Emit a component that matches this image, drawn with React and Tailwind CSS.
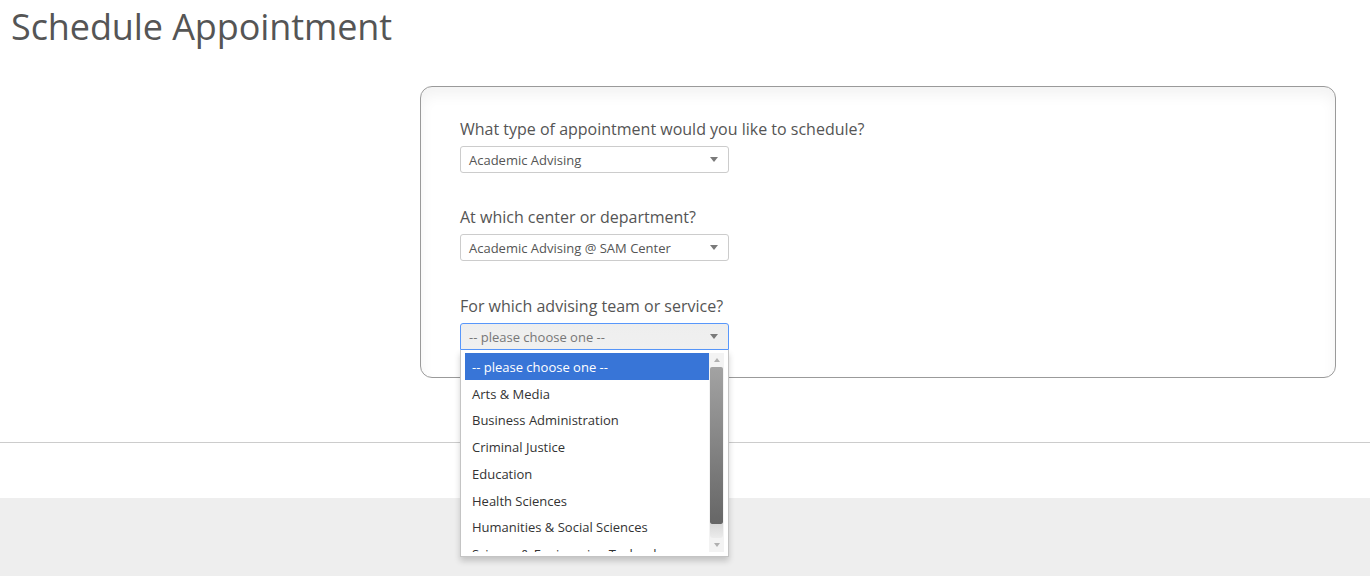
import React from "react";

function Arrow() {
  return (
    <svg width="8" height="5" viewBox="0 0 8 5" className="shrink-0">
      <path d="M0 0 L8 0 L4 5 Z" fill="#7a7a7a" />
    </svg>
  );
}

function Select({ value, open }) {
  return (
    <div
      className={
        open
          ? "flex h-[27px] w-[269px] items-center justify-between rounded-t-[3px] border border-[#5897fb] bg-gradient-to-b from-[#eeeeee] to-[#f0f0f0] pl-[8px] pr-[10px] text-[13px] text-[#777]"
          : "flex h-[27px] w-[269px] items-center justify-between rounded-[3px] border border-[#cccccc] bg-white pl-[8px] pr-[10px] text-[13px] text-[#555]"
      }
    >
      <span className="pt-[3px]">{value}</span>
      <Arrow />
    </div>
  );
}

const items = [
  "-- please choose one --",
  "Arts & Media",
  "Business Administration",
  "Criminal Justice",
  "Education",
  "Health Sciences",
  "Humanities & Social Sciences",
  "Science & Engineering Technology",
];

function Dropdown() {
  return (
    <div className="absolute left-0 top-[27px] z-10 flex h-[207px] w-[269px] border border-t-0 border-[#c4c4c4] bg-white pb-[4px] pl-[4px] pr-[4px] pt-[3px] shadow-[0_4px_6px_rgba(0,0,0,0.18)]">
      <ul className="h-[199px] w-[245px] overflow-hidden">
        {items.map((it, i) => (
          <li
            key={it}
            className={
              i === 0
                ? "flex h-[26.75px] items-center whitespace-nowrap bg-[#3875d7] pl-[7px] pt-[3px] text-[13px] text-white"
                : "flex h-[26.75px] items-center whitespace-nowrap pl-[7px] pt-[3px] text-[13px] text-[#333]"
            }
          >
            {it}
          </li>
        ))}
      </ul>
      <div className="flex h-[199px] w-[15px] flex-col bg-[#f3f3f3]">
        <div className="flex h-[14px] items-center justify-center">
          <svg width="6" height="4" viewBox="0 0 6 4">
            <path d="M0 4 L6 4 L3 0 Z" fill="#b0b0b0" />
          </svg>
        </div>
        <div className="mx-[1px] h-[157px] rounded-[2px] bg-gradient-to-b from-[#a3a3a3] to-[#666666]" />
        <div className="mx-[1px] h-[14px] rounded-b-[3px] bg-gradient-to-b from-[#d8d8d8] to-[#ececec]" />
        <div className="flex flex-1 items-center justify-center">
          <svg width="6" height="4" viewBox="0 0 6 4">
            <path d="M0 0 L6 0 L3 4 Z" fill="#b0b0b0" />
          </svg>
        </div>
      </div>
    </div>
  );
}

function Group({ label, children, last }) {
  return (
    <div className={last ? "" : "mb-[33.6px]"}>
      <div className="mb-[6px] text-[16px] leading-[22px] text-[#555]">{label}</div>
      {children}
    </div>
  );
}

export default function App() {
  return (
    <div className="min-h-[576px] bg-white font-['Open_Sans',sans-serif]">
      <h1 className="pl-[11px] pt-[7px] text-[36px] leading-[1.1] font-normal tracking-[-0.1px] text-[#555]">
        Schedule Appointment
      </h1>
      <div className="ml-[420px] mt-[39px] w-[916px] rounded-[12px] border border-[#9a9a9a] bg-white pb-[27px] pl-[39px] pt-[31px] shadow-[inset_0_8px_14px_rgba(0,0,0,0.05)]">
        <Group label="What type of appointment would you like to schedule?">
          <Select value="Academic Advising" />
        </Group>
        <Group label="At which center or department?">
          <Select value="Academic Advising @ SAM Center" />
        </Group>
        <Group label="For which advising team or service?" last>
          <div className="relative w-[269px]">
            <Select value="-- please choose one --" open />
            <Dropdown />
          </div>
        </Group>
      </div>
      <div className="mt-[64px] h-px bg-[#cccccc]" />
      <div className="mt-[55px] h-[78px] bg-[#eeeeee]" />
    </div>
  );
}
